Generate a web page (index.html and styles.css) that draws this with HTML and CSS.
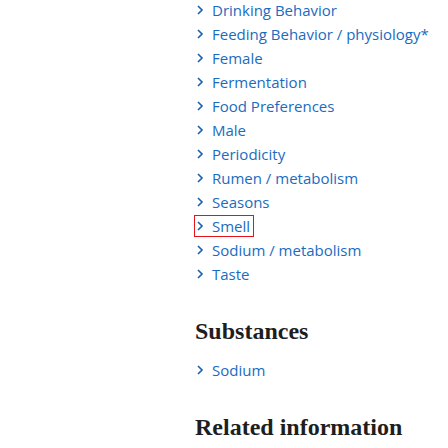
FILE: index.html
```html
<!DOCTYPE html>
<html lang="en">
<head>
<meta charset="utf-8">
<link rel="stylesheet" href="styles.css">
</head>
<body>
<div class="page">
  <ul class="list topics">
    <li><a class="link" href="#"><svg class="chev" viewBox="0 0 8 10"><path d="M2 1 L6 5 L2 9"/></svg><span class="label">Drinking Behavior</span></a></li>
    <li><a class="link" href="#"><svg class="chev" viewBox="0 0 8 10"><path d="M2 1 L6 5 L2 9"/></svg><span class="label">Feeding Behavior / physiology*</span></a></li>
    <li><a class="link" href="#"><svg class="chev" viewBox="0 0 8 10"><path d="M2 1 L6 5 L2 9"/></svg><span class="label">Female</span></a></li>
    <li><a class="link" href="#"><svg class="chev" viewBox="0 0 8 10"><path d="M2 1 L6 5 L2 9"/></svg><span class="label">Fermentation</span></a></li>
    <li><a class="link" href="#"><svg class="chev" viewBox="0 0 8 10"><path d="M2 1 L6 5 L2 9"/></svg><span class="label">Food Preferences</span></a></li>
    <li><a class="link" href="#"><svg class="chev" viewBox="0 0 8 10"><path d="M2 1 L6 5 L2 9"/></svg><span class="label">Male</span></a></li>
    <li><a class="link" href="#"><svg class="chev" viewBox="0 0 8 10"><path d="M2 1 L6 5 L2 9"/></svg><span class="label">Periodicity</span></a></li>
    <li><a class="link" href="#"><svg class="chev" viewBox="0 0 8 10"><path d="M2 1 L6 5 L2 9"/></svg><span class="label">Rumen / metabolism</span></a></li>
    <li><a class="link" href="#"><svg class="chev" viewBox="0 0 8 10"><path d="M2 1 L6 5 L2 9"/></svg><span class="label">Seasons</span></a></li>
    <li><a class="link focused" href="#"><svg class="chev" viewBox="0 0 8 10"><path d="M2 1 L6 5 L2 9"/></svg><span class="label">Smell</span></a></li>
    <li><a class="link" href="#"><svg class="chev" viewBox="0 0 8 10"><path d="M2 1 L6 5 L2 9"/></svg><span class="label">Sodium / metabolism</span></a></li>
    <li><a class="link" href="#"><svg class="chev" viewBox="0 0 8 10"><path d="M2 1 L6 5 L2 9"/></svg><span class="label">Taste</span></a></li>
  </ul>
  <h2 class="heading first">Substances</h2>
  <ul class="list">
    <li><a class="link" href="#"><svg class="chev" viewBox="0 0 8 10"><path d="M2 1 L6 5 L2 9"/></svg><span class="label">Sodium</span></a></li>
  </ul>
  <h2 class="heading second">Related information</h2>
</div>
</body>
</html>
```
FILE: styles.css
```css
html, body {
  margin: 0;
  padding: 0;
  background: rgb(255, 255, 255);
}
.page {
  padding-left: 195px;
  font-family: "Open Sans", "Noto Sans", sans-serif;
  color: rgb(26, 108, 192);
}
.list {
  list-style: none;
  margin: 0;
  padding: 0;
}
.topics {
  margin-top: -2px;
}
.list li {
  height: 24px;
  display: flex;
  align-items: center;
}
.link {
  display: inline-flex;
  align-items: center;
  height: 20px;
  padding-right: 3px;
  color: rgb(26, 108, 192);
  font-size: 15px;
  font-weight: 400;
  line-height: 20px;
  text-decoration: none;
}
.link.focused {
  outline: 1px solid rgb(229, 20, 27);
}
.chev {
  width: 8px;
  height: 10px;
  margin-left: 1px;
  margin-right: 8px;
  fill: none;
  stroke: rgb(22, 96, 176);
  stroke-width: 1.6;
}
.heading {
  margin: 0;
  font-family: "Liberation Serif", serif;
  font-weight: bold;
  font-size: 24px;
  line-height: 32px;
  color: rgb(30, 30, 30);
}
.heading.first {
  margin-top: 29px;
  margin-bottom: 11px;
}
.heading.second {
  margin-top: 29px;
}
```
